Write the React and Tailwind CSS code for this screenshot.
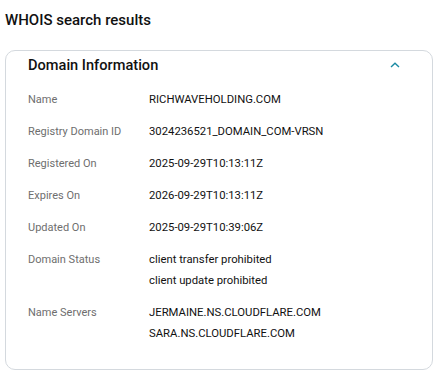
import React from "react";

const rows = [
  { label: "Name", values: ["RICHWAVEHOLDING.COM"] },
  { label: "Registry Domain ID", values: ["3024236521_DOMAIN_COM-VRSN"] },
  { label: "Registered On", values: ["2025-09-29T10:13:11Z"] },
  { label: "Expires On", values: ["2026-09-29T10:13:11Z"] },
  { label: "Updated On", values: ["2025-09-29T10:39:06Z"] },
  { label: "Domain Status", values: ["client transfer prohibited", "client update prohibited"] },
  { label: "Name Servers", values: ["JERMAINE.NS.CLOUDFLARE.COM", "SARA.NS.CLOUDFLARE.COM"] },
];

const App = () => {
  return (
    <div className="w-[438px] h-[375px] bg-white px-[5px] pt-[10px] font-['Roboto',sans-serif] text-[#111111]">
      <h1 className="text-[15px] font-medium leading-[20px]">WHOIS search results</h1>
      <div className="mt-[20px] w-[428px] border border-[#d4d9de] rounded-[10px] pb-[28px]">
        <div className="flex items-center justify-between pl-[22px] pr-[32px] pt-[1px] h-[25px] box-content">
          <h2 className="text-[14.6px] font-medium leading-[20px]">Domain Information</h2>
          <svg width="10" height="6" viewBox="0 0 10 6" fill="none">
            <path d="M1 5L5 1.2L9 5" stroke="#1a8aa3" strokeWidth="1.4" />
          </svg>
        </div>
        <div className="pl-[22px] pt-[15px] flex flex-col gap-[17px]">
          {rows.map((row) => (
            <div key={row.label} className="flex text-[11px] leading-[15px]">
              <div className="w-[121px] shrink-0 text-[#6e6e6e]">{row.label}</div>
              <div className="flex flex-col gap-[6px] text-[11.3px]">
                {row.values.map((v) => (
                  <div key={v}>{v}</div>
                ))}
              </div>
            </div>
          ))}
        </div>
      </div>
    </div>
  );
};

export default App;
